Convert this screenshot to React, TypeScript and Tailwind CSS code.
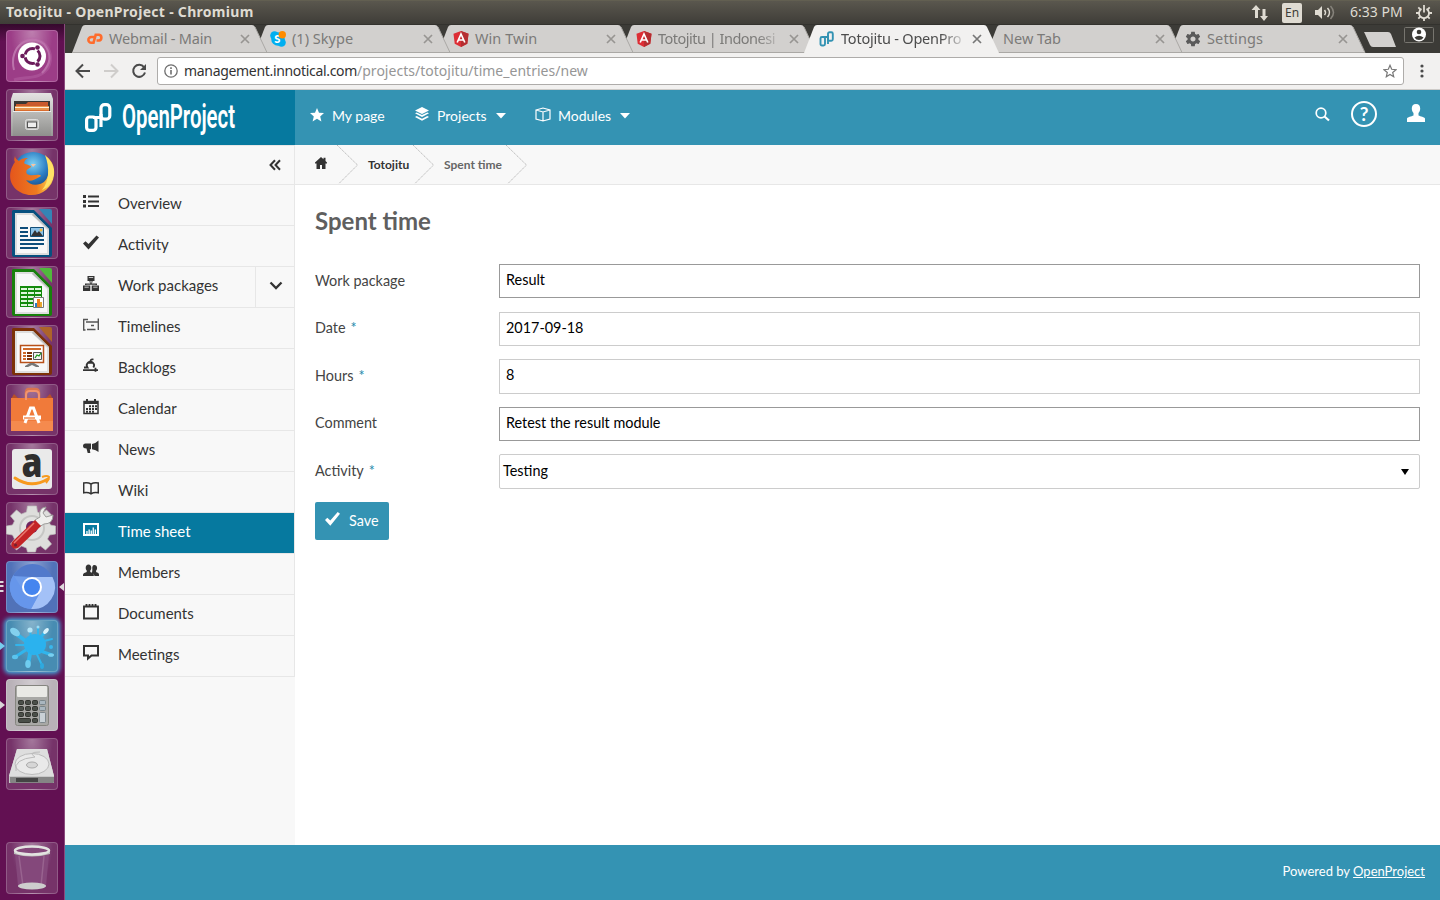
import React from "react";

type Kids = { children?: React.ReactNode };

/* ---------- launcher ---------- */

function Tile({ children, className = "bg-[#6d2660]", mark }: Kids & { className?: string; mark?: React.ReactNode }) {
  return (
    <div className="relative h-[52px] w-full shrink-0 pl-[6px]">
      <div className={"h-[52px] w-[52px] rounded-[4px] border border-white/20 bg-[radial-gradient(ellipse_at_50%_0%,rgba(255,255,255,0.38),rgba(255,255,255,0.06)_60%)] " + className}>
        <svg width="52" height="52" viewBox="0 0 52 52" className="-mt-px -ml-px block overflow-visible">
          {children}
        </svg>
      </div>
      {mark}
    </div>
  );
}

function Arrow({ color }: { color: string }) {
  return (
    <svg width="5" height="10" className="absolute top-[21px] left-0">
      <path d="M0 1L5 5L0 9z" fill={color} />
    </svg>
  );
}

function OfficeDoc({ dark, light, children }: Kids & { dark: string; light: string }) {
  return (
    <g>
      <path d="M7 3h21l18 18v27q0 2-2 2H8q-2 0-2-2V4z" fill={dark} />
      <path d="M33 2h11q2 0 2 2v13z" fill={light} />
      <path d="M9 6h18l16 16v26H9z" fill="#dedede" />
      <path d="M11 8h15l15 15v23H11z" fill="#f8f8f8" />
      <path d="M27 6l16 16V23L26 8z" fill="#bbb" />
      {children}
    </g>
  );
}

function Launcher() {
  return (
    <aside className="flex w-[65px] shrink-0 flex-col gap-[7px] border-r border-[#8a4a7d] bg-[#621052] bg-gradient-to-b from-[#35092d] to-[#621052] to-2% pt-[6px]">
      <Tile className="bg-[#96317f]">
        <path d="M8 40C2 16 24 2 38 14C46 24 45 34 36 43" fill="none" stroke="#c98abb" strokeWidth="2" opacity=".7" />
        <path d="M14 14C30 0 52 18 42 38C34 50 20 46 8 50" fill="none" stroke="#b867a6" strokeWidth="3" opacity=".45" />
        <circle cx="26" cy="26.500" r="14" fill="#fff" />
        <circle cx="26.500" cy="26" r="7.500" fill="none" stroke="#6b1b5b" strokeWidth="3" strokeDasharray="12.700 3" strokeDashoffset="-9.300" />
        <circle cx="16.500" cy="26" r="2.300" fill="#6b1b5b" />
        <circle cx="31.500" cy="17.500" r="2.300" fill="#6b1b5b" />
        <circle cx="31.500" cy="34.500" r="2.300" fill="#6b1b5b" />
      </Tile>
      <Tile>
        <defs>
          <linearGradient id="steel" x1="0" y1="0" x2="0" y2="1"><stop offset="0" stopColor="#e4e4e2" /><stop offset="1" stopColor="#989896" /></linearGradient>
          <linearGradient id="drawer" x1="0" y1="0" x2="0" y2="1"><stop offset="0" stopColor="#bcbcba" /><stop offset="1" stopColor="#8f8f8d" /></linearGradient>
        </defs>
        <path d="M7 4h38l2 6v37H5V10z" fill="url(#steel)" />
        <path d="M8 12h36v14H8z" fill="#3b3733" />
        <path d="M10 15h10l2-2h20v4H10z" fill="#c95a2c" />
        <path d="M9 17h34v4H9z" fill="#e9954c" />
        <path d="M9 18h34v1H9z" fill="#fff1d8" />
        <path d="M9 21h34v2H9z" fill="#d96c2e" />
        <path d="M7 22h38v25H7z" fill="url(#drawer)" />
        <path d="M7 22h38v1H7z" fill="#eee" />
        <rect x="19.500" y="30.500" width="13" height="10" rx="2" fill="#bdbdbb" stroke="#dedede" />
        <rect x="21.500" y="33" width="9" height="5.500" fill="#eee" stroke="#555" />
      </Tile>
      <Tile>
        <defs>
          <radialGradient id="globe" cx=".5" cy=".3" r=".7"><stop offset="0" stopColor="#7fd0f2" /><stop offset=".5" stopColor="#2a7ec4" /><stop offset="1" stopColor="#15376f" /></radialGradient>
          <linearGradient id="fox" x1="0" y1="0" x2="1" y2="0"><stop offset="0" stopColor="#e5561c" /><stop offset=".6" stopColor="#ee7a1f" /><stop offset="1" stopColor="#ffe25a" /></linearGradient>
        </defs>
        <circle cx="27" cy="24" r="20" fill="url(#globe)" />
        <path d="M9 8C8 11 8 13 9 14C1 25 3 38 14 44C28 52 46 44 48 27C49 19 46 13 41 9C46 22 42 34 34 36C28 38 23 36 20 32C25 34 28 32 35 28C33 25 26 29 21 26C19 22 22 21 25 19C25 17 20 17 18 15C19 12 20 11 22 10C17 10 15 11 13 13C11 12 9 10 9 8z" fill="url(#fox)" />
        <path d="M39 7C47 14 50 24 46 32C44 38 39 41 36 42C43 34 44 20 39 7z" fill="#ffe267" />
        <path d="M25 16h5l-3 3z" fill="#f6c3a4" />
      </Tile>
      <Tile>
        <OfficeDoc dark="#07507f" light="#3584b5">
          <path d="M14 21h8M14 25h8M14 29h8M14 33h24M14 37h24M14 41h18" stroke="#0d4d7a" strokeWidth="2" />
          <path d="M24.500 20.500h13v9h-13z" fill="#8dc3e8" stroke="#124f79" />
          <path d="M25 29l4-6 2 3 2-2 4 5z" fill="#333" /><circle cx="35" cy="23" r="1.500" fill="#f3b73d" />
        </OfficeDoc>
      </Tile>
      <Tile>
        <OfficeDoc dark="#18800c" light="#51b83c">
          <path d="M14 20h22v21H14z" fill="#138a0b" />
          <path d="M15 22h6v2h-6zM22 22h6v2h-6zM29 22h6v2h-6zM15 26h6v2h-6zM22 26h6v2h-6zM29 26h6v2h-6zM15 30h6v2h-6zM22 30h6v2h-6zM29 30h6v2h-6zM15 34h6v2h-6zM22 34h6v2h-6zM15 38h6v2h-6zM22 38h6v2h-6z" fill="#dff5dc" />
          <path d="M27.500 31.500h10v10h-10z" fill="#fff" stroke="#777" />
          <path d="M29 37h2v4h-2z" fill="#2b7cc3" /><path d="M31 33h3v8h-3z" fill="#f07f1b" /><path d="M34 36h2v5h-2z" fill="#e8a72f" />
        </OfficeDoc>
      </Tile>
      <Tile>
        <OfficeDoc dark="#7c3108" light="#ad642a">
          <path d="M14.500 20.500h23v17h-23z" fill="#fff" stroke="#b8511a" strokeWidth="1.500" />
          <path d="M17 24h18" stroke="#cf6a2b" strokeWidth="2" />
          <path d="M17 28h3M17 31h3M17 34h3" stroke="#cf6a2b" strokeWidth="2" /><path d="M21 28h5M21 31h5M21 34h5" stroke="#7c3108" strokeWidth="2" />
          <path d="M27.500 27.500h8v7h-8z" fill="#f3f3f3" stroke="#555" /><path d="M29 33l2-3 2 1 2-3" stroke="#1b9a1b" fill="none" strokeWidth="1.300" />
          <path d="M24 38h4l5 3v1h-3l-4-2-4 2h-3v-1z" fill="#777" />
        </OfficeDoc>
      </Tile>
      <Tile>
        <path d="M20 17V9q0-4 3-4h6q4 0 4 4v8" fill="none" stroke="#d9744e" strokeWidth="2.500" />
        <path d="M8 10l4 4h28l4-4 3 5H5z" fill="#b84f27" />
        <path d="M5 14h42v33H5z" fill="#f07a3a" /><path d="M5 37h42v10H5z" fill="#f58a4e" />
        <path d="M20 16v-5q0-4 4-4h5q4 0 4 4v5" fill="none" stroke="#f2946d" strokeWidth="2" />
        <path d="M19 39l5.500-15h3L33 39" stroke="#fff" strokeWidth="3" fill="none" />
        <path d="M17 33.500h18" stroke="#fff" strokeWidth="4" /><path d="M18 34h11" stroke="#f07a3a" strokeWidth="1.300" />
      </Tile>
      <Tile>
        <rect x="6" y="6" width="40" height="40" rx="3" fill="#eaeaea" />
        <text x="15.500" y="33.500" fontFamily="Open Sans" fontWeight="800" fontSize="40" fill="#2e2e2e" textLength="21" lengthAdjust="spacingAndGlyphs">a</text>
        <path d="M9 35q16 11 33 1" fill="none" stroke="#f79a1e" strokeWidth="3" strokeLinecap="round" />
        <path d="M36 34q5-2 7 0q0 3-3 6" fill="none" stroke="#f79a1e" strokeWidth="2" />
      </Tile>
      <Tile>
        <g fill="#dededc" stroke="#bdbdbb" strokeWidth=".7">
          <path d="M21.500 4h9l1 6 4 2 5-4 6 6-4 5 2 4 5 1v8l-6 1-2 4 4 5-6 6-5-4-4 2-1 4h-8l-1-4-5-2-5 4-6-6 4-5-2-4-6-1v-8l6-1 2-4-4-5 6-6 5 4 5-2z" />
        </g>
        <circle cx="26" cy="26" r="13" fill="#c6c6c4" /><circle cx="26" cy="26" r="11" fill="#e3e3e1" /><circle cx="26" cy="25" r="6" fill="#6e2560" />
        <path d="M29 18L34 15Q32 6 40 5L37 11L40 15L47 13Q47 22 38 22L33 25z" fill="#efefed" stroke="#9d9d9b" />
        <path d="M29 18l6 6L12 46q-4 2-6-1t1-6z" fill="#c42426" /><path d="M28 21L8 41" stroke="#e97b71" strokeWidth="1.500" /><circle cx="9.500" cy="43" r="1.500" fill="#732030" />
      </Tile>
      <Tile
        className="bg-[#4669b4]"
        mark={
          <>
            <svg width="5" height="13" className="absolute top-[19px] left-0"><path d="M0 1h3l1 1-1 1H0zM0 5h3l1 1-1 1H0zM0 10h3l1 1-1 1H0z" fill="#ded9dc" /></svg>
            <svg width="5" height="8" className="absolute top-[22px] left-[59px]"><path d="M5 0v8L0 4z" fill="#ded9dc" /></svg>
          </>
        }
      >
        <circle cx="26" cy="26" r="22" fill="#6e9ceb" />
        <path d="M7 15C16-1 38-1 46 16H26z" fill="#5179cb" />
        <path d="M26 16h20.500A22 22 0 0 1 25 48L35 30z" fill="#a3c1f7" />
        <path d="M7.500 14A22 22 0 0 0 25 48L34 31 18 31z" fill="#6696eb" />
        <circle cx="26" cy="26" r="10" fill="#fff" /><circle cx="26" cy="26" r="8" fill="#4585ef" />
      </Tile>
      <Tile className="bg-[#3c85ad] shadow-[0_0_4px_2px_#42a8dc]" mark={<Arrow color="#76cdee" />}>
        <g stroke="#31b5ec" strokeLinecap="round" fill="none">
          <path d="M25 25L9 13" strokeWidth="4" /><path d="M26 25L24 10" strokeWidth="2" /><path d="M28 25L40 11" strokeWidth="3" /><path d="M26 24L46 19" strokeWidth="2" />
          <path d="M26 28L46 35" strokeWidth="3" /><path d="M28 28L35 43" strokeWidth="2" /><path d="M25 28L22 45" strokeWidth="4" /><path d="M23 28L9 37" strokeWidth="3" /><path d="M24 25L10 25M32 20L32 7" strokeWidth="2" />
        </g>
        <ellipse cx="29" cy="24.500" rx="11" ry="10.500" fill="#2bb2ee" />
        <ellipse cx="9" cy="12" rx="5.500" ry="3.500" fill="#83d1ee" transform="rotate(35 9 12)" /><circle cx="24" cy="10" r="2.600" fill="#b5e6f8" /><ellipse cx="40" cy="11" rx="3.500" ry="2" fill="#d8f2fb" transform="rotate(-50 40 11)" />
        <ellipse cx="22" cy="44" rx="2.800" ry="4" fill="#6fcdf0" /><ellipse cx="36" cy="46" rx="2" ry="3" fill="#2ea9df" /><ellipse cx="45" cy="35" rx="3" ry="1.800" fill="#79cfef" /><ellipse cx="9" cy="37" rx="3" ry="2.200" fill="#5cc4ee" /><circle cx="32" cy="7" r="1.500" fill="#9adcf4" /><circle cx="45" cy="27" r="2" fill="#39b7ec" />
      </Tile>
      <Tile className="bg-[#b5adb4]" mark={<Arrow color="#d9d5d8" />}>
        <rect x="9.500" y="6.500" width="33" height="40" rx="2" fill="#a8a8a5" stroke="#85857f" />
        <rect x="11" y="7" width="30" height="11" rx="1" fill="#e9e9e5" />
        <g fill="#4a4f49" stroke="#22251f" strokeWidth=".8">
          {[12.5, 19.5, 26.5].map((x) => [21.5, 27.500, 33.5].map((y) => <rect key={x + "-" + y} x={x} y={y} width="5" height="4" rx="1" />))}
          <rect x="12.500" y="39.500" width="12" height="4" rx="1" /><rect x="26.500" y="39.500" width="5" height="4" rx="1" />
        </g>
        <g fill="#a9b6bf" stroke="#6f7a80" strokeWidth=".8"><rect x="33.500" y="21.500" width="6" height="4" rx="1" /><rect x="33.500" y="27.500" width="6" height="4" rx="1" /><rect x="33.500" y="33.500" width="6" height="10" rx="1" fill="#c9d1d6" /></g>
      </Tile>
      <Tile>
        <path d="M11 11h30l7 27v7H3v-7z" fill="#c9c9c9" />
        <path d="M11 11h30l7 27H3z" fill="#dedede" /><path d="M4 39h44v5q0 1-1 1H5q-1 0-1-1z" fill="#858585" /><path d="M10 40h22v4H10z" fill="#444" />
        <ellipse cx="26" cy="26" rx="17" ry="10.500" fill="#e9e9e9" stroke="#bbb" /><ellipse cx="26" cy="27" rx="5.500" ry="3" fill="#d6d6d6" stroke="#aaa" />
        <path d="M10 33q-3-12 19-14q-8-5 5-5" fill="none" stroke="#bbb" />
      </Tile>
      <div className="h-[38px] shrink-0" />
      <Tile>
        <path d="M9 12h34l-3 32q-14 6-28 0z" fill="#84487b" />
        <path d="M13 14l4 30M38 14l-3 30" stroke="#98638f" strokeWidth="1.500" />
        <ellipse cx="26" cy="44" rx="14" ry="3.500" fill="#cdcdcd" />
        <path d="M8 9v3q18 5 36 0V9q-18 5-36 0z" fill="#bdbdbb" />
        <ellipse cx="26" cy="8.500" rx="17" ry="4" fill="#84487a" stroke="#e3e3e1" strokeWidth="2.500" />
      </Tile>
    </aside>
  );
}

/* ---------- desktop panel ---------- */

function Panel() {
  return (
    <header className="flex h-[24px] shrink-0 items-center border-t border-[#625f51] bg-gradient-to-b from-[#5a574e] to-[#3f3d38] font-['Noto_Sans',sans-serif] text-[#dfdbd2]">
      <div className="w-[270px] pb-[2px] pl-[6px] text-[14px] font-bold tracking-[0.3px] whitespace-nowrap">Totojitu - OpenProject - Chromium</div>
      <div className="flex-1" />
      <svg width="18" height="18" viewBox="0 0 18 18" fill="#dfdbd2" className="mr-[13px]"><path d="M0.500 6L5 1l4.500 5H7v8H4V6zM9 12h2.500V5h3v7H17l-4 5z" /></svg>
      <div className="mr-[13px] h-[20px] w-[20px] rounded-[2px] bg-[#dfdbd2] text-center text-[12px] leading-[20px] text-[#3f3d38]">En</div>
      <svg width="20" height="16" viewBox="0 0 20 16" fill="none" className="mr-[15px]"><path d="M0 5h3l4-4v13l-4-4H0z" fill="#dfdbd2" /><path d="M9.500 5q2 2.500 0 5M12.500 3q4 4.500 0 9" stroke="#dfdbd2" strokeWidth="1.500" /><path d="M15.500 1q6 6.500 0 13" stroke="#86837b" strokeWidth="1.500" /></svg>
      <div className="mr-[13px] w-[53px] pb-[2px] text-[14px] whitespace-nowrap">6:33 PM</div>
      <svg width="16" height="16" viewBox="0 0 16 16" fill="none" stroke="#dfdbd2" className="mr-[8px]"><path d="M5.500 3.900a5 5 0 1 0 5 0" strokeWidth="1.800" /><path d="M8 0v7.500" strokeWidth="1.800" /><path d="M2.300 2.300l2 2M13.700 2.300l-2 2M0 8h3M13 8h3M2.300 13.700l2-2M13.700 13.700l-2-2M8 13v3" strokeWidth="1.800" /></svg>
    </header>
  );
}

/* ---------- browser ---------- */

const Links = ({ color }: { color: string }) => (
  <svg width="16" height="16" viewBox="0 0 16 16" fill="none" stroke={color} strokeWidth="1.900"><rect x="1.500" y="6" width="4.500" height="8.500" rx="1.500" /><rect x="9" y="1.200" width="4.800" height="8.500" rx="1.500" /><path d="M9 4v9M4 6h5" /></svg>
);
const Angular = () => (
  <svg width="16" height="16" viewBox="0 0 16 16"><path d="M8 0l7.500 2.700-1.200 10L8 16l-6.300-3.300-1.200-10z" fill="#dd2e35" /><path d="M8 0l7.500 2.700-1.200 10L8 16z" fill="#b52e31" /><path d="M4.200 11.500L8 3l3.800 8.500M5.700 9h4.600" fill="none" stroke="#fff" strokeWidth="1.700" /></svg>
);
const CPanel = () => (
  <svg width="17" height="16" viewBox="0 0 17 16" fill="none" stroke="#ff6c2c" strokeWidth="2.600"><path d="M7.500 6H4.300a2.900 2.900 0 0 0 0 5.800H6.500L8.700 3.800H12a2.900 2.900 0 0 1 0 5.700h-2.500" /></svg>
);
const Skype = () => (
  <svg width="16" height="16" viewBox="0 0 16 16" className="overflow-visible"><circle cx="8" cy="8" r="6.800" fill="#00aff0" /><circle cx="4.500" cy="4.500" r="4.300" fill="#00aff0" /><circle cx="11.500" cy="11.500" r="4.300" fill="#00aff0" /><text x="4.300" y="11.800" fontFamily="Lato" fontWeight="900" fontSize="11" fill="#fff">S</text><circle cx="12.300" cy="3.700" r="3.700" fill="#ff8c00" /></svg>
);
const Gear = () => (
  <svg width="16" height="16" viewBox="1 1 22 22" fill="#5a5a5a"><path d="M19.430 12.980c.04-.32.07-.64.07-.98s-.03-.66-.07-.98l2.110-1.650c.19-.15.24-.42.12-.64l-2-3.460c-.12-.22-.39-.3-.61-.22l-2.490 1c-.52-.4-1.080-.73-1.690-.98l-.38-2.650C14.460 2.180 14.250 2 14 2h-4c-.25 0-.46.18-.49.42l-.38 2.650c-.61.25-1.170.59-1.690.98l-2.490-1c-.23-.09-.49 0-.61.22l-2 3.460c-.13.22-.07.49.12.64l2.110 1.650c-.04.32-.07.65-.07.98s.03.66.07.98l-2.110 1.650c-.19.15-.24.42-.12.64l2 3.460c.12.22.39.3.61.22l2.490-1c.52.4 1.080.73 1.690.98l.38 2.650c.03.24.24.42.49.42h4c.25 0 .46-.18.49-.42l.38-2.650c.61-.25 1.170-.59 1.690-.98l2.490 1c.23.09.49 0 .61-.22l2-3.460c.12-.22.07-.49-.12-.64l-2.110-1.650zM12 15.500c-1.930 0-3.500-1.570-3.500-3.500s1.570-3.500 3.500-3.500 3.500 1.570 3.500 3.500-1.570 3.500-3.500 3.500z" /></svg>
);

const tabs: { title: string; icon?: React.ReactNode; active?: boolean; track: string }[] = [
  { title: "Webmail - Main", icon: <CPanel />, track: "tracking-[-0.18px]" },
  { title: "(1) Skype", icon: <Skype />, track: "tracking-[0.02px]" },
  { title: "Win Twin", icon: <Angular />, track: "tracking-[0.05px]" },
  { title: "Totojitu | Indonesi", icon: <Angular />, track: "tracking-[-0.5px]" },
  { title: "Totojitu - OpenPro", icon: <Links color="#3493b3" />, active: true, track: "tracking-[-0.22px]" },
  { title: "New Tab", track: "tracking-[0px]" },
  { title: "Settings", icon: <Gear />, track: "tracking-[0.12px]" },
];

function TabStrip() {
  return (
    <div className="flex h-[29px] shrink-0 border-t border-[#33322e] bg-[#3c3b37] pl-[7px] font-['Noto_Sans',sans-serif]">
      {tabs.map((t, i) => (
        <div key={t.title} className="relative flex w-[183px] shrink-0 items-center pl-[15px]" style={{ zIndex: t.active ? 20 : 10 - i }}>
          <svg width="196" height="28" viewBox="0 0 196 28" className="absolute top-0 left-0">
            <path d="M0 28L10 2Q11 0 13 0H180Q182 0 183 2L195 28z" fill={t.active ? "#f2f1f0" : "#d2d0ce"} />
            {!t.active && <path d="M0 27.500H195L183 2" fill="none" stroke="#aaa8a5" />}
          </svg>
          {t.icon && <div className="relative mr-[6px] w-[16px] shrink-0">{t.icon}</div>}
          <div className={"relative pb-[2px] text-[14.5px] leading-[20px] whitespace-nowrap " + (t.icon ? "w-[124px] " : "w-[146px] pl-px ") + t.track + (t.active ? " text-[#4c4c4c]" : " text-[#7b7a78]") + (t.title.length > 16 ? " [mask-image:linear-gradient(to_right,black_80%,transparent_102%)]" : "")}>
            {t.title}
          </div>
          <svg width="10" height="10" viewBox="0 0 10 10" className="relative ml-[7px] shrink-0" stroke={t.active ? "#777" : "#979592"} strokeWidth="1.700"><path d="M1 1l8 8M9 1L1 9" /></svg>
        </div>
      ))}
      <svg width="76" height="28" viewBox="0 0 76 28" className="ml-[11px]">
        <path d="M0 7H24q2 0 3 2l5 13H9q-2 0-3-2L1 9z" fill="#d2d0ce" />
        <rect x="40.500" y="2.500" width="29" height="15" rx="1" fill="none" stroke="#77756f" />
        <circle cx="55" cy="9.500" r="7" fill="#fff" /><circle cx="55" cy="7" r="2.300" fill="#3c3b37" /><path d="M50.500 12.500q4.500-3.500 9 0q-1.500 2.500-4.500 2.500t-4.500-2.500z" fill="#3c3b37" />
      </svg>
    </div>
  );
}

function Toolbar() {
  return (
    <div className="flex h-[37px] shrink-0 items-center border-b border-[#cdcbc8] bg-[#f2f1f0] pl-[10px] font-['Noto_Sans',sans-serif]">
      <svg width="16" height="16" viewBox="0 0 16 16" fill="none" stroke="#4a4a4a" strokeWidth="2"><path d="M15 8H2M8 1.500L1.500 8L8 14.500" /></svg>
      <svg width="16" height="16" viewBox="0 0 16 16" fill="none" stroke="#cfcdcb" strokeWidth="2" className="ml-[12px]"><path d="M1 8h13M8 1.500L14.500 8L8 14.500" /></svg>
      <svg width="16" height="16" viewBox="0 0 16 16" className="ml-[12px]"><path d="M13 4.200A6 6 0 1 0 14 9.500" fill="none" stroke="#4a4a4a" strokeWidth="2" /><path d="M15 1v6H9z" fill="#4a4a4a" /></svg>
      <div className="ml-[10px] flex h-[28px] w-[1247px] items-center rounded-[3px] border border-[#aeacaa] bg-white pr-[6px] pl-[6px]">
        <svg width="14" height="14" viewBox="0 0 14 14" fill="none" stroke="#6e6e6e" strokeWidth="1.300"><circle cx="7" cy="7" r="6.200" /><path d="M7 6v4.500M7 3.300v1.600" strokeWidth="1.600" /></svg>
        <div className="ml-[6px] flex-1 pb-px text-[14px] whitespace-nowrap text-[#333]">
          <span className="tracking-[-0.32px]">management.innotical.com</span><span className="tracking-[0.02px] text-[#969696]">/projects/totojitu/time_entries/new</span>
        </div>
        <svg width="14" height="14" viewBox="0 0 14 14" fill="none" stroke="#777" strokeWidth="1.200"><path d="M7 1.300l1.700 4 4.300.4-3.300 2.800 1 4.200L7 10.500l-3.700 2.200 1-4.200L1 5.700l4.300-.4z" /></svg>
      </div>
      <svg width="4" height="16" className="ml-[16px]" fill="#4a4a4a"><circle cx="2" cy="3" r="1.600" /><circle cx="2" cy="8" r="1.600" /><circle cx="2" cy="13" r="1.600" /></svg>
    </div>
  );
}

/* ---------- OpenProject ---------- */

const Caret = () => (<svg width="10" height="6" viewBox="0 0 10 6"><path d="M0 0h10L5 5.500z" fill="#fff" /></svg>);

function TopMenu() {
  return (
    <div className="flex h-[55px] shrink-0 bg-[#3493b3] text-[14px] text-white">
      <div className="flex w-[230px] bg-[#06799f]">
        <svg width="230" height="55" viewBox="0 0 230 55">
          <g fill="none" stroke="#fff" strokeWidth="3.200"><rect x="21.600" y="27" width="9.400" height="13.400" rx="3" /><rect x="36" y="14.600" width="8.800" height="14.600" rx="3.500" /><path d="M28 27.500h9M36 24v13" /></g>
          <text transform="translate(57 37.500) scale(1 1.620)" fontFamily="Roboto, sans-serif" fontSize="21" fontWeight="600" fill="#fff" textLength="113" lengthAdjust="spacingAndGlyphs">OpenProject</text>
        </svg>
      </div>
      <nav className="flex flex-1 items-center pb-[4px]">
        <svg width="14" height="14" viewBox="0 0 14 14" fill="#fff" className="-mt-[2px] ml-[15px]"><path d="M7 0l2 4.700 5 .4-3.800 3.300 1.200 5L7 10.700 2.600 13.400l1.200-5L0 5.100 5 4.700z" /></svg>
        <span className="ml-[8px] w-[53px] whitespace-nowrap">My page</span>
        <svg width="14" height="15" viewBox="0 0 14 15" fill="#fff" className="-mt-[2px] ml-[30px]"><path d="M7 0l7 3.500L7 7 0 3.500zM0 6.300l1.700-.9L7 8l5.300-2.600 1.700.9L7 10zM0 10l1.700-.9L7 11.700l5.300-2.600L14 10l-7 3.800z" /></svg>
        <span className="ml-[8px] w-[50px] whitespace-nowrap">Projects</span>
        <span className="ml-[9px]"><Caret /></span>
        <svg width="16" height="15" viewBox="0 0 16 15" fill="none" stroke="#fff" strokeWidth="1.200" className="-mt-[2px] ml-[29px]"><path d="M1 3l7-2 7 2v9l-7 2-7-2zM1 3l7 2 7-2M8 5v9" /></svg>
        <span className="ml-[7px] w-[53px] whitespace-nowrap">Modules</span>
        <span className="ml-[9px]"><Caret /></span>
        <div className="flex-1" />
        <svg width="15" height="15" viewBox="0 0 15 15" fill="none" stroke="#fff" className="-mt-[2px]"><circle cx="6" cy="6" r="4.800" strokeWidth="1.700" /><path d="M9.500 9.500l4.500 4" strokeWidth="2.200" /></svg>
        <svg width="28" height="28" viewBox="0 0 28 28" className="-mt-[3px] ml-[20px]"><circle cx="14" cy="14" r="12" fill="none" stroke="#fff" strokeWidth="2" /><text x="14" y="20.500" textAnchor="middle" fontFamily="Lato" fontWeight="700" fontSize="19" fill="#fff">?</text></svg>
        <svg width="18" height="18" viewBox="0 0 18 18" fill="#fff" className="-mt-[5px] mr-[15px] ml-[29px]"><path d="M9 0c3 0 4.200 2 4.200 4.500 0 2.200-.9 3.500-1.700 4.500v2.500c2 1 6 1.500 6.500 3V18H0v-3.500c.5-1.500 4.500-2 6.500-3V9c-.8-1-1.700-2.300-1.700-4.500C4.800 2 6 0 9 0z" /></svg>
      </nav>
    </div>
  );
}

const items: { label: string; icon: React.ReactNode; active?: boolean; more?: boolean }[] = [
  { label: "Overview", icon: <path d="M0 1h3v3H0zM0 6h3v3H0zM0 10.500h3v3H0zM5 1.500h11v2H5zM5 6.500h11v2H5zM5 11h11v2H5z" /> },
  { label: "Activity", icon: <path d="M0 8.500l2.500-2.300 3 2.800L13.500.5l2.500 2L5.500 14.500z" /> },
  { label: "Work packages", more: true, icon: <path d="M4.500 0h7v5h-7zM6 5.500h4v.8H6zM7.300 6h1.400v1.500h5.300V10h-1.400V8.700H3.400V10H2V7.500h5.300zM0 9.500h7.300v5.500H0zM8.700 9.500H16v5.500H8.700zM5.800 1v.8h4.400V1zM1.500 10.700v.8h4.300v-.8zM10.200 10.700v.8h4.300v-.8z" fillRule="evenodd" /> },
  { label: "Timelines", icon: <path d="M2.500 2.500H.700v10.500h1.800M15.300 1.500v11.500M4 12.500h8.500M3 5h12M8 8.500h3M2.500 2.500h2.500" fill="none" stroke="#555" strokeWidth="1.400" /> },
  { label: "Backlogs", icon: <path d="M0 12.200h15M12.500 9.800v4M1 9.500h3.500A3.600 3.600 0 1 1 10.300 9.500M4.500 4.800h4.500L7.500 2.800Q8 .800 10.500 1.500" fill="none" stroke="#333" strokeWidth="1.800" /> },
  { label: "Calendar", icon: <g><path d="M1 2.500h14v12H1z" fill="none" stroke="#333" strokeWidth="1.500" /><path d="M1 2h14v3H1zM3 0h2v3H3zM11 0h2v3h-2z" /><path d="M6 6.300h2v2H6zM9 6.300h2v2H9zM12 6.300h2v2H12zM3 9h2v2H3zM6 9h2v2H6zM9 9h2v2H9zM12 9h2v2H12zM3 11.700h2v2H3zM6 11.700h2v2H6zM9 11.700h2v2H9z" /></g> },
  { label: "News", icon: <path d="M15.500 .500v11.500q-2.500-2-6.500-2.700V4q4-.8 6.500-3.500zM8 3.500v5.800H6.800l.5 3.700H4.700L3.500 8.500Q0 8.500 0 6t2.500-2.500z" /> },
  { label: "Wiki", icon: <path d="M8 3Q5 1.200.7 2v9.800Q5 11 8 12.800q3-1.800 7.300-1V2Q11 1.200 8 3v10" fill="none" stroke="#333" strokeWidth="1.500" /> },
  { label: "Time sheet", active: true, icon: <path d="M0 1h16v13H0zM2 3v9h12V3zM3.300 9h1.300v3H3.300zM5.500 7.500h1.300V12H5.500zM7.600 8.500h1.300V12H7.600zM9.600 5.500h1.300V12H9.600zM11.700 7.500h1.300V12h-1.300z" fillRule="evenodd" /> },
  { label: "Members", icon: <path d="M11.300 2c1.800 0 2.800 1.200 2.800 3 0 1.300-.6 2.200-1 2.600V9c1.200.6 2.900.8 2.900 2.500V13h-4.500q0-2.500-2.700-3.500.7-1 .5-3Q8.800 2 11.300 2zM5.500 1.500C7.300 1.500 8.300 3 8.300 4.700c0 1.300-.5 2.200-1 2.800V9c1.300.7 3.500 1 3.500 2.700V13H0v-1.300C0 10 2.300 9.700 3.700 9V7.500c-.5-.6-1-1.500-1-2.800C2.700 3 3.700 1.500 5.500 1.500z" /> },
  { label: "Documents", icon: <path d="M1 2.500h14v12H1zM3.500 0v2.500M6.500 0v2.500M9.500 0v2.500M12.500 0v2.500" fill="none" stroke="#333" strokeWidth="1.900" /> },
  { label: "Meetings", icon: <path d="M1 1h14v9.500H8.500L5 13.500v-3H1z" fill="none" stroke="#333" strokeWidth="2" /> },
];

function Sidebar() {
  return (
    <aside className="flex w-[230px] shrink-0 flex-col bg-[#f8f8f8]">
      <div className="flex h-[40px] items-center justify-end border-y border-r border-[#e7e7e7] pr-[13px] pb-px">
        <svg width="12" height="12" viewBox="0 0 12 12" fill="none" stroke="#333" strokeWidth="2"><path d="M6 1.200L1.500 6L6 10.800M11 1.200L6.500 6L11 10.800" /></svg>
      </div>
      {items.map((it) => (
        <div key={it.label} className={"flex h-[41px] shrink-0 border-r border-b border-[#e7e7e7] pl-[18px] " + (it.active ? "bg-[#06799f] text-white" : "text-[#333]")}>
          <svg width="16" height="16" viewBox="0 0 16 16" fill={it.active ? "#fff" : "#333"} className="mt-[9px] shrink-0">{it.icon}</svg>
          <span className="ml-[19px] flex-1 text-[15px] leading-[37px] whitespace-nowrap">{it.label}</span>
          {it.more && (
            <div className="flex w-[39px] items-center justify-center border-l border-[#e7e7e7] pb-[4px] pl-px">
              <svg width="14" height="9" viewBox="0 0 14 9" fill="none" stroke="#333" strokeWidth="2.300"><path d="M1.500 1.500L7 7l5.500-5.500" /></svg>
            </div>
          )}
        </div>
      ))}
    </aside>
  );
}

const Sep = () => (
  <svg width="22" height="39" viewBox="0 0 22 39" fill="none" stroke="#bbb" strokeDasharray="1.500 .7"><path d="M0 0L20.500 20L2 38.500" /></svg>
);

function Row({ label, req, row, box, children }: Kids & { label: string; req?: boolean; row: string; box: string }) {
  return (
    <div className={"flex " + row}>
      <label className="w-[184px] shrink-0 text-[14.4px] text-[#444]">
        {label}
        {req && <span className="ml-[5px] text-[#2389ab]">*</span>}
      </label>
      <div className={"flex flex-1 justify-between border bg-white text-[14.4px] leading-[30px] text-black " + box}>{children}</div>
    </div>
  );
}

function Content() {
  return (
    <main className="flex flex-1 flex-col bg-white">
      <div className="flex h-[40px] items-center border-b border-[#e7e7e7] bg-[#f8f8f8] text-[12px] font-bold text-[#333]">
        <svg width="12" height="12" viewBox="0 0 12 12" fill="#333" className="-mt-[4px] mr-[10px] ml-[20px]"><path d="M6 0l2.500 2.300V.8h2v3.300L12 5.500v1h-1.500V12H7V8H5v4H1.500V6.500H0v-1z" /></svg>
        <Sep />
        <span className="w-[42px] pl-[9px] whitespace-nowrap">Totojitu</span>
        <span className="ml-[12px] flex"><Sep /></span>
        <span className="w-[59px] pl-[9px] whitespace-nowrap text-[#666]">Spent time</span>
        <span className="ml-[12px] flex"><Sep /></span>
      </div>
      <div className="pr-[20px] pl-[20px]">
        <h1 className="mt-[18px] h-[61px] text-[24px] leading-[36px] font-bold text-[#5f5f5f]">Spent time</h1>
        <Row label="Work package" row="h-[48px] leading-[33px]" box="h-[34px] border-[#999] pl-[6px]">Result</Row>
        <Row label="Date" req row="h-[47px] leading-[31px]" box="h-[34px] border-[#ccc] pl-[6px]">2017-09-18</Row>
        <Row label="Hours" req row="h-[48px] leading-[33px]" box="h-[35px] border-[#ccc] pl-[6px]">8</Row>
        <Row label="Comment" row="h-[47px] leading-[31px]" box="h-[34px] border-[#999] pl-[6px]">Retest the result module</Row>
        <Row label="Activity" req row="h-[48px] leading-[33px]" box="h-[35px] rounded-[2px] border-[#ccc] pl-[3px] pr-[10px]">
          <span className="leading-[32px]">Testing</span>
          <svg width="8" height="6" viewBox="0 0 8 6" className="mt-[14px]"><path d="M0 0h8L4 6z" /></svg>
        </Row>
        <button className="flex h-[38px] w-[74px] items-center rounded-[2px] bg-[#3493b3] pl-[10px] text-[14.4px] text-white">
          <svg width="15" height="14" viewBox="0 0 15 14" fill="#fff" className="-mt-[4px]"><path d="M0 8l2.300-2.200 3 2.700L12.700 0l2.300 1.800L5.300 13.800z" /></svg>
          <span className="ml-[9px]">Save</span>
        </button>
      </div>
    </main>
  );
}

export default function App() {
  return (
    <div className="flex h-[900px] w-[1440px] flex-col overflow-hidden font-[Lato,sans-serif]">
      <Panel />
      <div className="flex h-[876px]">
        <Launcher />
        <div className="flex w-[1375px] flex-col">
          <TabStrip />
          <Toolbar />
          <TopMenu />
          <div className="flex h-[700px] shrink-0">
            <Sidebar />
            <Content />
          </div>
          <footer className="flex h-[55px] shrink-0 items-center justify-end bg-[#3493b3] pr-[15px] pb-[1px] text-[13px] whitespace-pre text-white">
            Powered by <a className="underline">OpenProject</a>
          </footer>
        </div>
      </div>
    </div>
  );
}
